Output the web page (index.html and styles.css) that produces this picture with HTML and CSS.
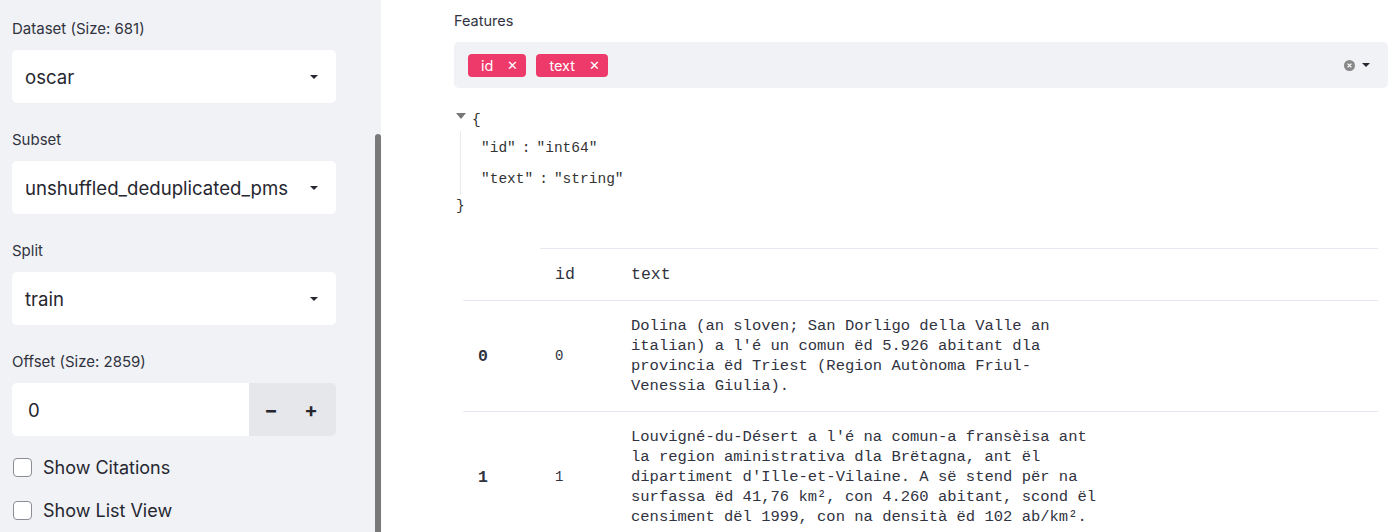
FILE: index.html
```html
<!DOCTYPE html>
<html>
<head>
<meta charset="utf-8">
<link rel="stylesheet" href="styles.css">
</head>
<body>
<div class="app">
  <aside class="sidebar">
    <div class="widget">
      <div class="label">Dataset (Size: 681)</div>
      <div class="select"><span>oscar</span><i class="caret"></i></div>
    </div>
    <div class="widget">
      <div class="label">Subset</div>
      <div class="select"><span>unshuffled_deduplicated_pms</span><i class="caret"></i></div>
    </div>
    <div class="widget">
      <div class="label">Split</div>
      <div class="select"><span>train</span><i class="caret"></i></div>
    </div>
    <div class="widget">
      <div class="label">Offset (Size: 2859)</div>
      <div class="number">
        <div class="num-field">0</div>
        <div class="num-btns"><span class="minus">−</span><span class="plus">+</span></div>
      </div>
    </div>
    <div class="checks">
      <label class="check"><span class="box"></span>Show Citations</label>
      <label class="check"><span class="box"></span>Show List View</label>
    </div>
    <div class="thumb"></div>
  </aside>
  <main class="main">
    <div class="label">Features</div>
    <div class="multi">
      <div class="chips">
        <span class="chip">id<b>✕</b></span>
        <span class="chip">text<b>✕</b></span>
      </div>
      <div class="multi-ctrl">
        <svg width="11" height="11" viewBox="0 0 11 11"><circle cx="5.5" cy="5.5" r="5.5" fill="#888"/><path d="M3.6 3.6l3.8 3.8M7.4 3.6l-3.8 3.8" stroke="#fff" stroke-width="1.3"/></svg>
        <i class="caret"></i>
      </div>
    </div>
    <div class="json">
      <div class="jline"><i class="jtri"></i><span class="brace">{</span></div>
      <div class="jbody">
        <div class="jrow">"id"<span class="colon">:</span>"int64"</div>
        <div class="jrow">"text"<span class="colon">:</span>"string"</div>
      </div>
      <div class="jline close"><span class="brace">}</span></div>
    </div>
    <table class="tbl">
      <thead>
        <tr><th class="blank"></th><th class="c-id">id</th><th>text</th></tr>
      </thead>
      <tbody>
        <tr>
          <th class="idx">0</th>
          <td class="c-id">0</td>
          <td><div class="txt">Dolina (an sloven; San Dorligo della Valle an italian) a l'é un comun ëd 5.926 abitant dla provincia ëd Triest (Region Autònoma Friul-Venessia Giulia).</div></td>
        </tr>
        <tr>
          <th class="idx">1</th>
          <td class="c-id">1</td>
          <td><div class="txt">Louvigné-du-Désert a l'é na comun-a fransèisa ant la region aministrativa dla Brëtagna, ant ël dipartiment d'Ille-et-Vilaine. A së stend për na surfassa ëd 41,76 km², con 4.260 abitant, scond ël censiment dël 1999, con na densità ëd 102 ab/km².</div></td>
        </tr>
      </tbody>
    </table>
  </main>
</div>
</body>
</html>
```

FILE: styles.css
```css
html, body {
  margin: 0;
  padding: 0;
  background: #ffffff;
  overflow: hidden;
}
body {
  font-family: "Inter", "Noto Sans", sans-serif;
  color: #31333f;
}
.app {
  display: flex;
  height: 532px;
}
.sidebar {
  position: relative;
  width: 381px;
  flex: none;
  background: #f0f2f6;
  padding: 19px 0 0 12px;
  box-sizing: border-box;
  display: flex;
  flex-direction: column;
  gap: 27px;
}
.widget {
  width: 324px;
}
.label {
  font-size: 15px;
  line-height: 20px;
  height: 20px;
  margin-bottom: 11px;
  color: #31333f;
}
.select {
  height: 53px;
  background: #ffffff;
  border-radius: 5px;
  display: flex;
  align-items: center;
  justify-content: space-between;
  padding: 0 18px 0 13px;
  font-size: 18.6px;
  color: #262730;
}
.caret {
  display: block;
  width: 0;
  height: 0;
  border-left: 4px solid transparent;
  border-right: 4px solid transparent;
  border-top: 4px solid #262730;
}
.number {
  display: flex;
  height: 53px;
}
.num-field {
  width: 237px;
  background: #ffffff;
  border-radius: 5px 0 0 5px;
  display: flex;
  align-items: center;
  padding-left: 16px;
  box-sizing: border-box;
  font-size: 18.6px;
  color: #262730;
}
.num-btns {
  flex: 1;
  background: #e6e7ea;
  border-radius: 0 5px 5px 0;
  display: flex;
  align-items: center;
  justify-content: space-around;
  font-size: 20px;
  font-weight: 700;
  color: #262730;
  padding: 0 5px 0 2px;
}
.checks {
  display: flex;
  flex-direction: column;
  gap: 19px;
  margin-top: -8px;
}
.check {
  display: flex;
  align-items: center;
  height: 24px;
  font-size: 18px;
  color: #262730;
}
.box {
  width: 17px;
  height: 17px;
  border: 1px solid #8c8c95;
  border-radius: 4px;
  background: #ffffff;
  margin: 0 11px 0 1px;
}
.thumb {
  position: absolute;
  right: 0;
  top: 134px;
  bottom: 0;
  width: 6px;
  background: #797979;
  border-radius: 3px 3px 0 0;
}
.main {
  flex: 1;
  padding: 11px 12px 0 73px;
  box-sizing: border-box;
  min-width: 0;
}
.main .label {
  font-size: 14.5px;
}
.multi {
  height: 46px;
  background: #f0f2f6;
  border-radius: 5px;
  display: flex;
  align-items: center;
  justify-content: space-between;
  padding: 0 18px 0 14px;
}
.chips {
  display: flex;
  gap: 10px;
}
.chip {
  display: flex;
  align-items: center;
  justify-content: space-between;
  height: 23px;
  box-sizing: border-box;
  padding: 0 8px 0 13px;
  background: #ee3a6a;
  color: #ffffff;
  border-radius: 4px;
  font-size: 14.5px;
  gap: 14px;
}
.chip b {
  font-weight: 400;
  font-size: 13px;
}
.multi-ctrl {
  display: flex;
  align-items: center;
  gap: 7px;
}
.json {
  margin-top: 21px;
  font-family: "Liberation Mono", "DejaVu Sans Mono", monospace;
  font-size: 14.5px;
  color: #333333;
  padding-left: 2px;
}
.jline {
  height: 22px;
  line-height: 22px;
  display: flex;
  align-items: center;
}
.jtri {
  display: block;
  width: 0;
  height: 0;
  border-left: 5px solid transparent;
  border-right: 5px solid transparent;
  border-top: 6px solid #777777;
  margin: 0 6px 8px 0;
}
.jbody {
  margin-left: 4px;
  border-left: 1px solid #ebebeb;
  padding: 2px 0 0 20px;
}
.jrow {
  height: 31px;
  line-height: 31px;
}
.colon {
  margin: 0 6px;
}
.tbl {
  margin: 31px 10px 0 9px;
  width: calc(100% - 19px);
  border-collapse: collapse;
  font-family: "Liberation Mono", "DejaVu Sans Mono", monospace;
  color: #31333f;
}
.tbl th, .tbl td {
  text-align: left;
  vertical-align: middle;
  padding: 15px 15px;
  border-bottom: 1px solid #e6e9ef;
}
.tbl thead th {
  border-top: 1px solid #e6e9ef;
  font-size: 16.5px;
  font-weight: 400;
  height: 21px;
  padding-top: 15px;
  padding-bottom: 15px;
}
.tbl thead th.blank {
  border-top: none;
  width: 47px;
}
.c-id {
  width: 46px;
}
.tbl td {
  font-size: 15.5px;
  line-height: 20px;
}
.tbl td.c-id {
  font-size: 14px;
}
.tbl th.idx {
  font-size: 16.5px;
  font-weight: 700;
}
.txt {
  width: 50.4ch;
}
```
